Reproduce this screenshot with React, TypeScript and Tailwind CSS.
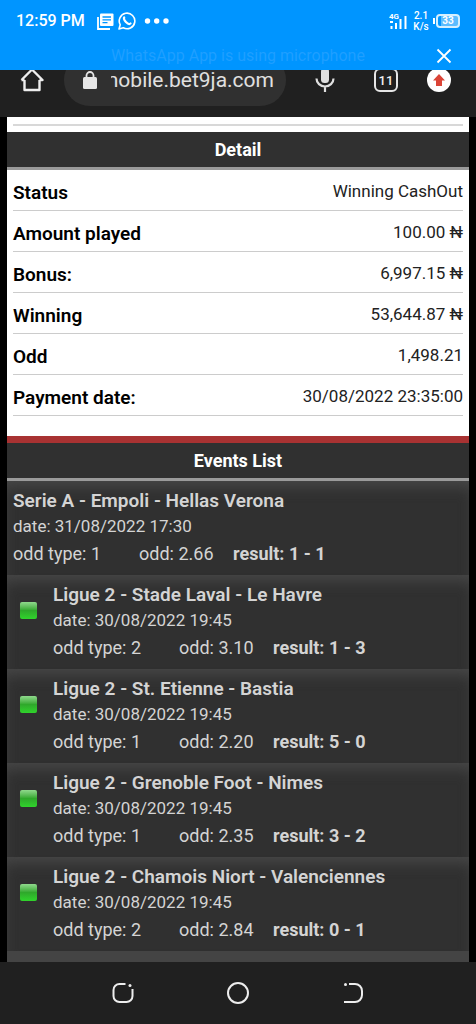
import React from "react";

type Detail = { label: string; value: string };

type BetEvent = {
  title: string;
  date: string;
  oddType: string;
  odd: string;
  result: string;
  won: boolean;
};

const details: Detail[] = [
  { label: "Status", value: "Winning CashOut" },
  { label: "Amount played", value: "100.00 ₦" },
  { label: "Bonus:", value: "6,997.15 ₦" },
  { label: "Winning", value: "53,644.87 ₦" },
  { label: "Odd", value: "1,498.21" },
  { label: "Payment date:", value: "30/08/2022 23:35:00" },
];

const events: BetEvent[] = [
  { title: "Serie A - Empoli - Hellas Verona", date: "31/08/2022 17:30", oddType: "1", odd: "2.66", result: "1 - 1", won: false },
  { title: "Ligue 2 - Stade Laval - Le Havre", date: "30/08/2022 19:45", oddType: "2", odd: "3.10", result: "1 - 3", won: true },
  { title: "Ligue 2 - St. Etienne - Bastia", date: "30/08/2022 19:45", oddType: "1", odd: "2.20", result: "5 - 0", won: true },
  { title: "Ligue 2 - Grenoble Foot - Nimes", date: "30/08/2022 19:45", oddType: "1", odd: "2.35", result: "3 - 2", won: true },
  { title: "Ligue 2 - Chamois Niort - Valenciennes", date: "30/08/2022 19:45", oddType: "2", odd: "2.84", result: "0 - 1", won: true },
];

function StatusBar() {
  return (
    <header className="relative z-10 flex h-[70px] flex-col bg-[#0095ff] text-white">
      <div className="flex h-[42px] items-center justify-between pl-4 pr-4">
        <div className="flex items-center">
          <span className="text-base font-medium">12:59 PM</span>
          <svg className="ml-3 h-[17px] w-[17px]" viewBox="0 0 17 17" aria-hidden="true">
            <path d="M1 4v12h12" fill="none" stroke="#fff" strokeWidth="1.8" />
            <rect x="3" y="0.5" width="13.5" height="12.5" rx="1" fill="#fff" />
            <path d="M5.5 4h8.5M5.5 6.8h8.5M5.5 9.6h5" stroke="#0095ff" strokeWidth="1.3" />
          </svg>
          <svg className="ml-1 h-[18px] w-[18px]" viewBox="0 0 18 18" fill="none" stroke="#fff" aria-hidden="true">
            <path d="M1 17l1.2-4.3A7.8 7.8 0 1 1 5.3 15.8z" strokeWidth="1.6" strokeLinejoin="round" />
            <path d="M6.200 5.400c-.7 1 .3 3 1.700 4.500s3.500 2.600 4.600 1.600" strokeWidth="2.2" strokeLinecap="round" />
          </svg>
          <svg className="ml-2 h-1.5 w-[26px]" viewBox="0 0 26 6" fill="#fff" aria-hidden="true">
            <circle cx="3.5" cy="3" r="2.7" />
            <circle cx="12.7" cy="3" r="2.7" />
            <circle cx="22" cy="3" r="2.7" />
          </svg>
        </div>
        <div className="flex items-center">
          <svg className="h-[18px] w-[18px]" viewBox="0 0 18 18" fill="#fff" aria-label="4G signal">
            <text x="0" y="7" fontSize="8" fontWeight="700" fontFamily="Roboto, sans-serif">4G</text>
            <rect x="1.5" y="14" width="2" height="3" />
            <rect x="6" y="11" width="2" height="6" />
            <rect x="10.5" y="7" width="2" height="10" />
            <rect x="15.5" y="4" width="2" height="13" />
            <rect x="1" y="9" width="3" height="2" />
          </svg>
          <div className="ml-1.5 flex w-4 flex-col items-center text-[10px] font-medium leading-[11px]">
            <span>2.1</span>
            <span>K/s</span>
          </div>
          <div className="ml-1 flex items-center gap-px">
            <span className="h-1.5 w-0.5 bg-white" />
            <span className="flex h-[14px] w-6 items-center justify-center rounded border-2 border-[#d4efff] bg-linear-to-r from-[#0095ff] from-15% to-[#5cbcff] to-15% text-[10px] font-bold leading-none">33</span>
          </div>
        </div>
      </div>
      <div className="grid grow grid-cols-[1fr_auto_1fr] items-center px-4">
        <p className="col-start-2 text-base text-[#1f9fff]">WhatsApp App is using microphone</p>
        <button type="button" aria-label="Dismiss" className="mr-2 justify-self-end">
          <svg className="h-4 w-4" viewBox="0 0 16 16" stroke="#fff" strokeWidth="1.8" aria-hidden="true">
            <path d="M1.500 1.500l13 13M14.500 1.500l-13 13" />
          </svg>
        </button>
      </div>
    </header>
  );
}

function BrowserBar() {
  return (
    <div className="-mt-[27px] flex h-[74px] items-center bg-[#202020] pl-5 pr-[25px]">
      <button type="button" aria-label="Home" className="shrink-0">
        <svg className="h-6 w-6" viewBox="0 0 24 24" fill="none" stroke="#ededed" strokeWidth="2.4" strokeLinejoin="round" aria-hidden="true">
          <path d="M4.500 12v10h15V12M1.500 12L12 1.500l10.500 10.500h-3M1.500 12h3" />
        </svg>
      </button>
      <div className="ml-5 flex h-[52px] min-w-0 grow items-center rounded-full bg-[#303030] pl-[19px] pr-3">
        <svg className="h-[18px] w-[14px] shrink-0" viewBox="0 0 14 18" aria-hidden="true">
          <path d="M3.500 8V4.500a3.500 3.500 0 0 1 7 0V8" fill="none" stroke="#e6e6e6" strokeWidth="1.8" />
          <rect x="0" y="6" width="14" height="12" rx="1.5" fill="#e6e6e6" />
        </svg>
        <div className="ml-3.5 flex min-w-0 grow justify-end overflow-hidden text-[21px] leading-8 text-[#e0e0e0]">
          <span>mobile.bet9ja.com</span>
        </div>
      </div>
      <button type="button" aria-label="Voice search" className="ml-[29px] shrink-0">
        <svg className="h-[26px] w-5" viewBox="0 0 20 26" fill="none" aria-hidden="true">
          <rect x="6" y="1" width="8" height="15" rx="3.5" fill="#e0e0e0" />
          <path d="M1.500 11.500a8.500 8 0 0 0 17 0M10 19.500v5.500" stroke="#e0e0e0" strokeWidth="2.2" />
        </svg>
      </button>
      <button type="button" aria-label="11 open tabs" className="ml-[39px] flex h-6 w-6 shrink-0 items-center justify-center rounded-md border-2 border-[#e6e6e6] text-[13px] font-medium leading-none text-[#f0f0f0]">
        11
      </button>
      <button type="button" aria-label="Update available" className="ml-[29px] flex h-6 w-6 shrink-0 items-center justify-center rounded-full bg-white">
        <svg className="h-3 w-3" viewBox="0 0 12 12" fill="#db4437" aria-hidden="true">
          <path d="M6 0l6 6.500H9V12H3V6.500H0z" />
        </svg>
      </button>
    </div>
  );
}

function SectionTitle({ children }: { children: React.ReactNode }) {
  return (
    <h2 className="border-b-3 border-[#9a9a9a] bg-[#303030] text-center text-lg font-bold leading-[35px] text-white">
      {children}
    </h2>
  );
}

function EventRow({ event }: { event: BetEvent }) {
  return (
    <li className="flex h-[94px] bg-[#303030] px-1.5 pt-2 text-[#d4d4d4] shadow-[inset_0_10px_14px_-4px_#474747]">
      {event.won && (
        <span className="ml-[7px] mr-4 mt-[19px] h-[17px] w-[17px] shrink-0 rounded-xs bg-linear-to-b from-[#8fd98c] via-[#2fa82b] to-[#2fd42b]" />
      )}
      <div>
        <h3 className="text-[19px] font-semibold leading-6">{event.title}</h3>
        <p className="text-[17px] leading-[26px]">date: {event.date}</p>
        <p className="flex text-lg leading-[30px]">
          <span className="w-[126px]">odd type: {event.oddType}</span>
          <span className="w-[94px]">odd: {event.odd}</span>
          <strong className="font-bold">result: {event.result}</strong>
        </p>
      </div>
    </li>
  );
}

function NavBar() {
  return (
    <nav className="flex h-[62px] items-center justify-between bg-[#202020] px-[111px]">
      <button type="button" aria-label="Recent apps">
        <svg className="h-6 w-6" viewBox="0 0 24 24" fill="none" stroke="#ededed" strokeWidth="2" aria-hidden="true">
          <path d="M14.500 3H8.500a6 6 0 0 0-6 6v6a6 6 0 0 0 6 6h7a6 6 0 0 0 6-6V8" />
          <circle cx="19" cy="4.5" r="1.5" fill="#ededed" stroke="none" />
        </svg>
      </button>
      <button type="button" aria-label="Home screen">
        <svg className="h-6 w-6" viewBox="0 0 24 24" fill="none" stroke="#ededed" strokeWidth="2" aria-hidden="true">
          <circle cx="12" cy="12" r="10" />
        </svg>
      </button>
      <button type="button" aria-label="Back">
        <svg className="h-6 w-6" viewBox="0 0 24 24" fill="none" stroke="#ededed" strokeWidth="2" aria-hidden="true">
          <path d="M8 3h6a7 7 0 0 1 7 7v4a7 7 0 0 1-7 7H3" />
          <circle cx="4.5" cy="3.5" r="1.5" fill="#ededed" stroke="none" />
        </svg>
      </button>
    </nav>
  );
}

export default function App() {
  return (
    <div className="flex min-h-screen flex-col bg-black font-[Roboto,sans-serif]">
      <StatusBar />
      <BrowserBar />
      <main className="mx-[7px] grow bg-white">
        <div className="mx-1.5 mb-1.5 h-[9px] border-b-2 border-[#d8d8d8]" />
        <SectionTitle>Detail</SectionTitle>
        <dl className="mx-1.5 pb-5">
          {details.map((d) => (
            <div key={d.label} className="flex h-[41px] items-center justify-between border-b border-[#cccccc] pt-1">
              <dt className="pt-0.5 text-[19px] font-semibold text-black">{d.label}</dt>
              <dd className="text-[17px] text-[#222222]">{d.value}</dd>
            </div>
          ))}
        </dl>
        <section className="border-t-[7px] border-[#a83232]">
          <SectionTitle>Events List</SectionTitle>
          <ul>
            {events.map((e) => (
              <EventRow key={e.title} event={e} />
            ))}
          </ul>
          <div className="h-[11px] bg-[#444444]" />
        </section>
      </main>
      <NavBar />
    </div>
  );
}
